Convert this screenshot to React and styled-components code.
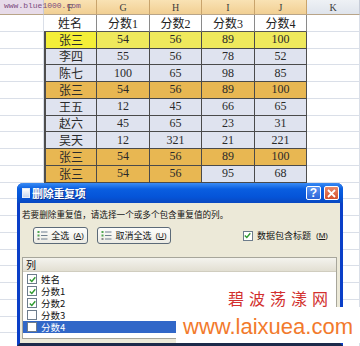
import React from 'react';
import styled, { createGlobalStyle } from 'styled-components';

const COLS = [44, 53, 53, 52, 53, 52, 53];
const LETTERS = ['', 'F', 'G', 'H', 'I', 'J', 'K'];

// tone per data cell: y = yellow, Y = bright yellow, o = orange, b = lavender
const DATA = [
	{ cells: ['张三', '54', '56', '89', '100'], tones: 'Yyyyy' },
	{ cells: ['李四', '55', '56', '78', '52'], tones: 'bbbbb' },
	{ cells: ['陈七', '100', '65', '98', '85'], tones: 'bbbbb' },
	{ cells: ['张三', '54', '56', '89', '100'], tones: 'ooooo' },
	{ cells: ['王五', '12', '45', '66', '65'], tones: 'bbbbb' },
	{ cells: ['赵六', '45', '65', '23', '31'], tones: 'bbbbb' },
	{ cells: ['吴天', '12', '321', '21', '221'], tones: 'bbbbb' },
	{ cells: ['张三', '54', '56', '89', '100'], tones: 'ooooo' },
	{ cells: ['张三', '54', '56', '95', '68'], tones: 'ooobb' },
];

const TONES = {
	Y: '#f4ef38',
	y: '#efe95c',
	o: '#e8b752',
	b: '#dfe3ef',
	w: '#ffffff',
};

const COLUMNS = [
	{ label: '姓名', checked: true },
	{ label: '分数1', checked: true },
	{ label: '分数2', checked: true },
	{ label: '分数3', checked: false },
	{ label: '分数4', checked: false, selected: true },
];

const GlobalStyle = createGlobalStyle`
	html, body {
		margin: 0;
		padding: 0;
		background: #ffffff;
	}
	#root {
		width: 360px;
		height: 346px;
		overflow: hidden;
	}
`;

function Check({ checked }) {
	return (
		<CheckBox>
			{checked && (
				<svg width="7" height="7" viewBox="0 0 7 7">
					<path d="M0.8 3.4 L2.8 5.4 L6.3 1.2" fill="none" stroke="#2f9a2f" strokeWidth="1.4" />
				</svg>
			)}
		</CheckBox>
	);
}

function ListIcon() {
	return (
		<svg width="11" height="11" viewBox="0 0 11 11">
			<rect x="0.5" y="1" width="2" height="2" fill="#52a552" />
			<rect x="0.5" y="4.5" width="2" height="2" fill="#52a552" />
			<rect x="0.5" y="8" width="2" height="2" fill="#8a8a8a" />
			<rect x="4" y="1.5" width="6.5" height="1" fill="#6f7f8f" />
			<rect x="4" y="5" width="6.5" height="1" fill="#6f7f8f" />
			<rect x="4" y="8.5" width="6.5" height="1" fill="#6f7f8f" />
		</svg>
	);
}

export default function App() {
	const emptyRows = Array.from({ length: 10 });

	return (
		<Screen>
			<GlobalStyle />
			<Sheet>
				{LETTERS.map((l, i) => (
					<ColHead key={'h' + i} tone={i === 0 ? 'left' : i === 6 ? 'plain' : 'sel'}>
						{l}
					</ColHead>
				))}

				<Cell />
				{['姓名', '分数1', '分数2', '分数3', '分数4'].map((t) => (
					<TitleCell key={t}>{t}</TitleCell>
				))}
				<Cell />

				{DATA.map((row, r) => (
					<React.Fragment key={'r' + r}>
						<Cell />
						{row.cells.map((t, c) => (
							<DataCell key={c} bg={TONES[row.tones[c]]} first={c === 0} last={c === 4}>
								{t}
							</DataCell>
						))}
						<Cell />
					</React.Fragment>
				))}

				{emptyRows.map((_, r) =>
					COLS.map((__, c) => <Cell key={'e' + r + '-' + c} />)
				)}
			</Sheet>

			<SiteMark>www.blue1000.com</SiteMark>

			<Dialog>
				<TitleBar>
					<TitleIcon />
					<TitleText>删除重复项</TitleText>
					<CaptionButton kind="help">?</CaptionButton>
					<CaptionButton kind="close">
						<svg width="9" height="9" viewBox="0 0 9 9">
							<path d="M1 1 L8 8 M8 1 L1 8" stroke="#fff" strokeWidth="1.8" />
						</svg>
					</CaptionButton>
				</TitleBar>

				<Body>
					<Hint>若要删除重复值，请选择一个或多个包含重复值的列。</Hint>

					<ButtonRow>
						<PushButton wide={false}>
							<ListIcon />
							全选<Key>(<u>A</u>)</Key>
						</PushButton>
						<PushButton wide>
							<ListIcon />
							取消全选<Key>(<u>U</u>)</Key>
						</PushButton>
						<HeaderOption>
							<Check checked />
							数据包含标题<Key>(<u>M</u>)</Key>
						</HeaderOption>
					</ButtonRow>

					<ColumnList>
						<ListHead>列</ListHead>
						<ListBody>
							{COLUMNS.map((col) => (
								<ListItem key={col.label} selected={col.selected}>
									<Check checked={col.checked} />
									{col.label}
								</ListItem>
							))}
						</ListBody>
					</ColumnList>
				</Body>
			</Dialog>

			<RedMark>碧波荡漾网</RedMark>
			<Banner>www.laixuea.com</Banner>
		</Screen>
	);
}

const Screen = styled.div`
	position: relative;
	width: 360px;
	height: 346px;
	overflow: hidden;
	background: #ffffff;
	font-family: 'Liberation Serif', 'Noto Sans CJK SC', serif;
`;

const Sheet = styled.div`
	display: grid;
	grid-template-columns: ${COLS.map((w) => w + 'px').join(' ')};
	grid-template-rows: 15px;
	grid-auto-rows: 16.75px;
`;

const ColHead = styled.div`
	box-sizing: border-box;
	display: flex;
	align-items: center;
	justify-content: center;
	font-size: 10px;
	color: #3c3c3c;
	border-right: 1px solid ${({ tone }) => (tone === 'sel' ? '#c9a46c' : '#c6ccd8')};
	border-bottom: 1px solid #b8a488;
	background: ${({ tone }) =>
		tone === 'sel'
			? 'linear-gradient(#f9e2b4, #f1cf93)'
			: tone === 'left'
			? '#e7dbe9'
			: 'linear-gradient(#eef1f5, #dfe4ec)'};
`;

const Cell = styled.div`
	box-sizing: border-box;
	border-right: 1px solid #dadfe8;
	border-bottom: 1px solid #dadfe8;
	background: #ffffff;
`;

const TitleCell = styled.div`
	box-sizing: border-box;
	display: flex;
	align-items: center;
	justify-content: center;
	font-size: 12px;
	color: #222;
	background: #ffffff;
	border-right: 1px solid #8a8a8a;
	border-bottom: 1px solid #555;
	&:nth-child(8) {
		border-left: 1px solid #8a8a8a;
	}
`;

const DataCell = styled.div`
	box-sizing: border-box;
	display: flex;
	align-items: center;
	justify-content: center;
	font-size: 12px;
	color: #2a2a2a;
	background: ${({ bg }) => bg};
	border-bottom: 1px solid #4a4a4a;
	border-right: ${({ last }) => (last ? '2px solid #4e4e4e' : '1px solid #4a4a4a')};
	border-left: ${({ first }) => (first ? '2px solid #4e4e4e' : 'none')};
	margin-right: ${({ last }) => (last ? '-1px' : '0')};
`;

const SiteMark = styled.div`
	position: absolute;
	left: 4px;
	top: 1px;
	font-family: 'Liberation Mono', monospace;
	font-size: 8px;
	line-height: 10px;
	color: #7d4c7f;
`;

const Dialog = styled.div`
	position: absolute;
	left: 17px;
	top: 183px;
	width: 326px;
	height: 163px;
	box-sizing: border-box;
	display: flex;
	flex-direction: column;
	background: #ece9d8;
	border: 3px solid #0a3fc8;
	border-top: none;
	border-bottom-color: #1d2a4a;
	border-radius: 6px 6px 0 0;
	font-family: 'Noto Sans CJK SC', 'Liberation Sans', sans-serif;
`;

const TitleBar = styled.div`
	height: 20px;
	margin: 0 -3px;
	padding: 0 4px 0 5px;
	display: flex;
	align-items: center;
	gap: 2px;
	border-radius: 6px 6px 0 0;
	background: linear-gradient(#3a8cf5 0%, #0a5ee0 30%, #0554d8 70%, #0a48c0 100%);
`;

const TitleIcon = styled.div`
	width: 6px;
	height: 8px;
	background: linear-gradient(#ffffff, #c6d6f0);
	border: 1px solid #e8eef8;
`;

const TitleText = styled.div`
	flex: 1;
	font-size: 11px;
	font-weight: 700;
	color: #ffffff;
	letter-spacing: -0.3px;
	text-shadow: 1px 1px 0 #0b2f8a;
`;

const CaptionButton = styled.div`
	width: 15px;
	height: 14px;
	box-sizing: border-box;
	display: flex;
	align-items: center;
	justify-content: center;
	border: 1px solid #ffffff;
	border-radius: 2px;
	font-family: 'Liberation Sans', sans-serif;
	font-size: 12px;
	font-weight: 700;
	color: #ffffff;
	background: ${({ kind }) =>
		kind === 'close' ? 'linear-gradient(#e98a6a, #d4502c)' : 'linear-gradient(#5b95f2, #2a64d8)'};
	margin-left: ${({ kind }) => (kind === 'close' ? '1px' : '0')};
`;

const Body = styled.div`
	flex: 1;
	display: flex;
	flex-direction: column;
	padding: 6px 3px 0 2px;
	font-size: 9px;
	color: #111;
`;

const Hint = styled.div`
	height: 10px;
	line-height: 10px;
	font-size: 8.6px;
	white-space: nowrap;
`;

const ButtonRow = styled.div`
	margin-top: 8px;
	height: 17px;
	display: flex;
	align-items: center;
	padding: 0 9px 0 11px;
	gap: 9px;
`;

const Key = styled.span`
	font-family: 'Liberation Sans', sans-serif;
	font-size: 8px;
	margin-left: 1px;
	u {
		text-decoration: underline;
	}
`;

const PushButton = styled.div`
	box-sizing: border-box;
	width: ${({ wide }) => (wide ? '74px' : '55px')};
	height: 17px;
	display: flex;
	align-items: center;
	justify-content: center;
	gap: 3px;
	border: 1px solid #5c6a78;
	border-radius: 3px;
	background: linear-gradient(#fdfdfb, #ecebe4);
	font-size: 9px;
	line-height: 11px;
	white-space: nowrap;
`;

const HeaderOption = styled.div`
	margin-left: auto;
	display: flex;
	align-items: center;
	gap: 4px;
	font-size: 9px;
	line-height: 11px;
	white-space: nowrap;
`;

const CheckBox = styled.div`
	box-sizing: border-box;
	width: 10px;
	height: 10px;
	flex: none;
	display: flex;
	align-items: center;
	justify-content: center;
	border: 1px solid #6d7c8c;
	background: #ffffff;
`;

const ColumnList = styled.div`
	margin-top: 13px;
	height: 80px;
	display: flex;
	flex-direction: column;
	border: 1px solid #a7a69b;
	background: #ffffff;
`;

const ListHead = styled.div`
	height: 13px;
	padding-left: 3px;
	display: flex;
	align-items: center;
	font-size: 10px;
	line-height: 12px;
	background: linear-gradient(#f4f3ee, #e2dfd2);
	border-bottom: 1px solid #d0cdbf;
`;

const ListBody = styled.div`
	flex: 1;
	padding-top: 1px;
	display: flex;
	flex-direction: column;
`;

const ListItem = styled.div`
	height: 12px;
	display: flex;
	align-items: center;
	gap: 4px;
	padding-left: 4px;
	font-size: 9.5px;
	line-height: 12px;
	color: ${({ selected }) => (selected ? '#ffffff' : '#111')};
	background: ${({ selected }) => (selected ? '#3167c8' : 'transparent')};
`;

const RedMark = styled.div`
	position: absolute;
	left: 228px;
	top: 289px;
	font-family: 'Noto Sans CJK SC', serif;
	font-size: 16px;
	line-height: 18px;
	letter-spacing: 5px;
	color: #d2302e;
`;

const Banner = styled.div`
	position: absolute;
	left: 176px;
	top: 307px;
	width: 184px;
	height: 36px;
	box-sizing: border-box;
	padding: 3px 0 0 7px;
	background: #ffffff;
	font-family: 'Liberation Sans', sans-serif;
	font-size: 22px;
	line-height: 33px;
	color: #f27a2c;
	white-space: nowrap;
`;
